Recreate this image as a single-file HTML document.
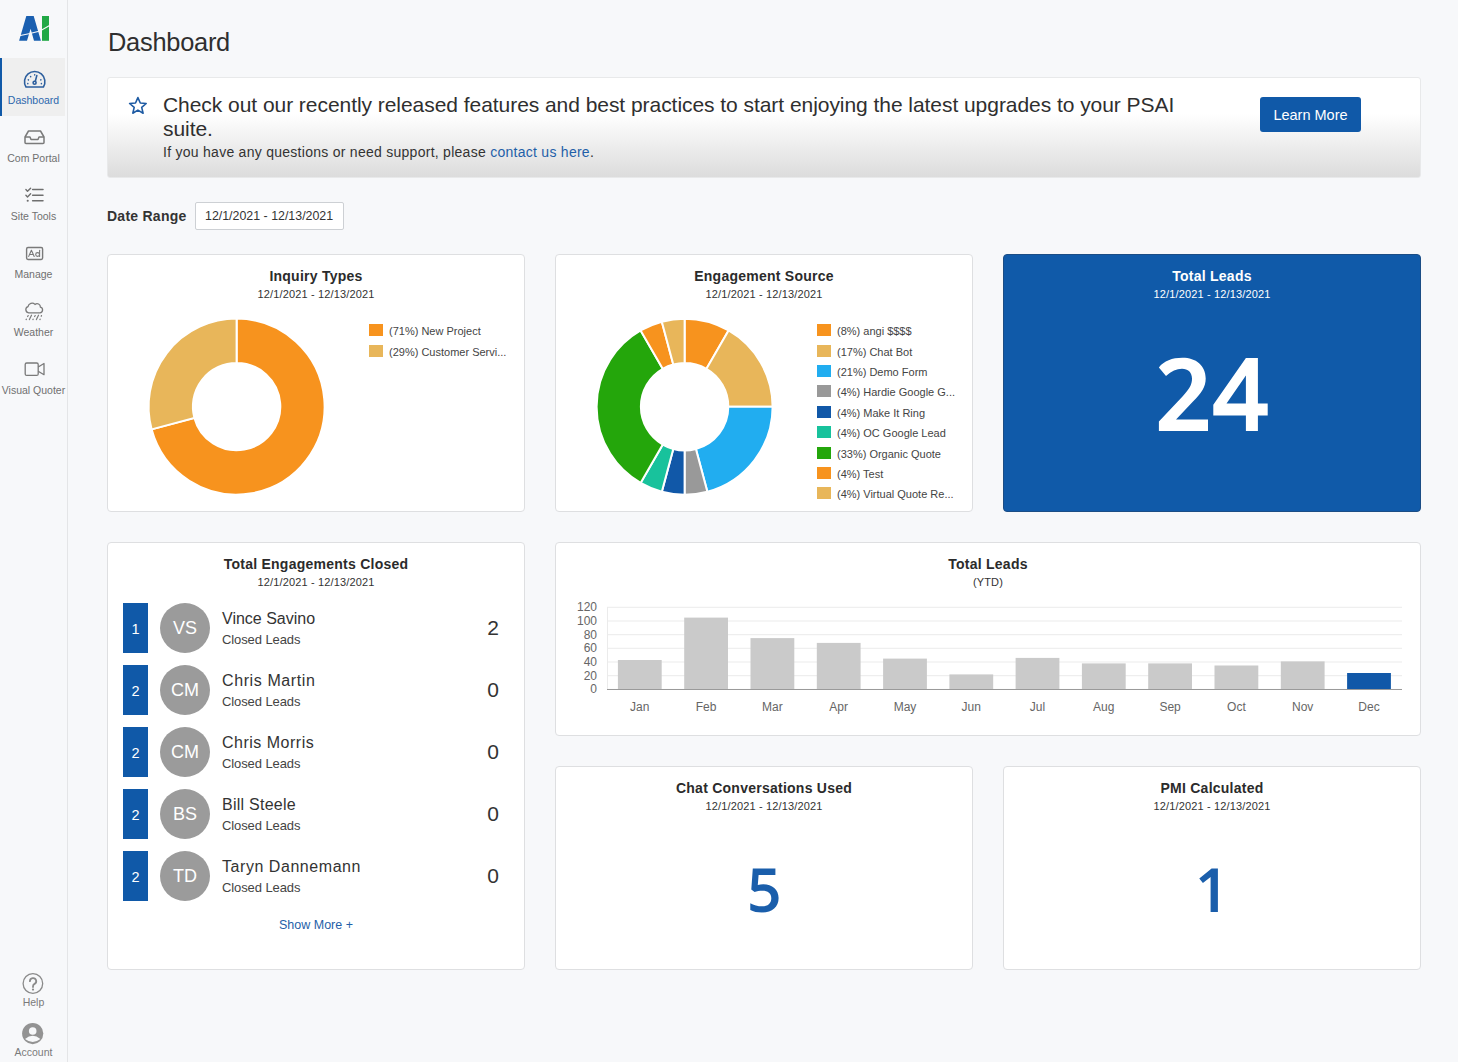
<!DOCTYPE html>
<html><head><meta charset="utf-8">
<style>
*{box-sizing:border-box;margin:0;padding:0}
html,body{width:1458px;height:1062px;overflow:hidden}
body{background:#f7f8fa;font-family:"Liberation Sans",sans-serif;color:#333;position:relative}
.a{position:absolute;white-space:nowrap}
#side{position:absolute;left:0;top:0;width:68px;height:1062px;background:#f7f8fa;border-right:1px solid #e4e5e7}
.nav{position:absolute;left:0;width:67px;height:58px}
.nav.act{background:linear-gradient(90deg,#efefef 65px,transparent 65px)}
.nav.act:before{content:"";position:absolute;left:0;top:0;width:2px;height:58px;background:#1059a8}
.nav svg{position:absolute;left:0;top:0}
.lbl{position:absolute;left:-20px;width:107px;font-size:10.5px;color:#707070;white-space:nowrap;text-align:center;line-height:12px}
.act .lbl{color:#2d67ad}
.card{position:absolute;background:#fff;border:1px solid #dedfe1;border-radius:4px}
.ct{position:absolute;left:0;right:0;text-align:center;font-weight:bold;font-size:14px;color:#2b2b2b;line-height:16px;letter-spacing:0.25px;white-space:nowrap}
.cs{position:absolute;left:0;right:0;text-align:center;font-size:11px;color:#333;line-height:13px;letter-spacing:0.15px;margin-top:1px;white-space:nowrap}
.leg{position:absolute;font-size:11px;color:#444;line-height:13px;white-space:nowrap;margin-top:1px}
.sw{position:absolute;width:14px;height:12px}
.yl{position:absolute;left:560px;width:37px;text-align:right;font-size:12px;color:#666;line-height:14px}
.ml{position:absolute;width:60px;top:700px;text-align:center;font-size:12px;color:#666;line-height:14px}
.rk{position:absolute;left:123px;width:25px;height:50px;background:#1059a8;color:#fff;font-size:14.5px;text-align:center;line-height:52px}
.av{position:absolute;left:160px;width:50px;height:50px;border-radius:50%;background:#9b9b9b;color:#fff;font-size:18px;text-align:center;line-height:50px}
.nm{position:absolute;left:222px;font-size:16px;color:#333;line-height:18px;white-space:nowrap;letter-spacing:0.2px}
.cl{position:absolute;left:222px;font-size:13px;color:#444;line-height:15px;white-space:nowrap;letter-spacing:-0.1px;margin-top:-1px}
.num{position:absolute;left:439px;width:60px;text-align:right;font-size:21px;color:#333;line-height:24px}
</style></head>
<body>
<div id="side">
  <svg class="a" style="left:0;top:0" width="67" height="50" viewBox="0 0 67 50">
    <path d="M26.3,16 L33.7,16 L40.9,40.8 L34,40.8 L30.6,28.7 L27,40.8 L19.1,40.8 Z" fill="#1a5fb0"/>
    <rect x="42" y="16" width="7" height="24.8" fill="#21a845"/>
    <path d="M18,36 L30,33.5 L40,31 L50,25.3" stroke="#f7f8fa" stroke-width="1.1" fill="none"/>
  </svg>
  <div class="nav act" style="top:58px">
    <svg width="67" height="58" viewBox="0 0 67 58" fill="none" stroke="#2d5f9e" stroke-width="1.6" stroke-linecap="round" stroke-linejoin="round">
      <path d="M26,29 L43.4,29 A10.2,10.2 0 1 0 26,29 Z"/>
      <circle cx="34.6" cy="24.8" r="1.5"/>
      <path d="M35.3,23.3 L36.8,17.6"/>
      <path d="M28.3,21.8 L28.4,21.9 M30.6,18.6 L30.7,18.7 M34.7,16.8 L34.7,16.9 M40.9,21.8 L40.8,21.9 M27.8,25.6 L27.8,25.7 M41.4,25.6 L41.4,25.7" stroke-width="1.5"/>
    </svg>
    <div class="lbl" style="top:36px">Dashboard</div>
  </div>
  <div class="nav" style="top:116px">
    <svg width="67" height="58" viewBox="0 0 67 58" fill="none" stroke="#7a7a7a" stroke-width="1.5" stroke-linejoin="round">
      <path d="M25,21 L28.5,15 L40.5,15 L44,21 L44,26.5 Q44,27.5 43,27.5 L26,27.5 Q25,27.5 25,26.5 Z"/>
      <path d="M25,21 L30,21 L31,23.5 L38,23.5 L39,21 L44,21"/>
    </svg>
    <div class="lbl" style="top:36px">Com Portal</div>
  </div>
  <div class="nav" style="top:174px">
    <svg width="67" height="58" viewBox="0 0 67 58" fill="none" stroke="#6f6f6f" stroke-width="1.4" stroke-linecap="round" stroke-linejoin="round">
      <path d="M25.9,15.6 L27.5,17.3 L30.6,14.2 M25.9,21.3 L27.5,22.9 L30.6,19.8"/>
      <circle cx="27.7" cy="26.8" r="1.05" fill="#6f6f6f" stroke="none"/>
      <path d="M32.6,15.5 L43,15.5 M32.6,21.3 L43,21.3 M32.6,26.8 L43,26.8" stroke-width="1.5"/>
    </svg>
    <div class="lbl" style="top:36px">Site Tools</div>
  </div>
  <div class="nav" style="top:232px">
    <svg width="67" height="58" viewBox="0 0 67 58" fill="none" stroke="#7a7a7a" stroke-width="1.4" stroke-linecap="round" stroke-linejoin="round">
      <rect x="26.6" y="15.5" width="16" height="12" rx="1.4"/>
      <path d="M28.7,24.4 L31.4,18.3 L34.2,24.4 M29.6,22.5 L33.3,22.5" stroke-width="1.1"/>
      <circle cx="37.6" cy="22.5" r="1.9" stroke-width="1.1"/>
      <path d="M39.6,18.2 L39.6,24.4" stroke-width="1.1"/>
    </svg>
    <div class="lbl" style="top:36px">Manage</div>
  </div>
  <div class="nav" style="top:290px">
    <svg width="67" height="58" viewBox="0 0 67 58" fill="none" stroke="#7a7a7a" stroke-width="1.3" stroke-linecap="round">
      <path d="M28.6,22.8 A3.2,3.2 0 0 1 28.0,16.6 A4.1,4.1 0 0 1 35.0,14.4 A3.3,3.3 0 0 1 40.4,17.1 A2.9,2.9 0 0 1 39.9,22.8 Z"/>
      <path d="M31.5,25.2 L29.4,29.6 M38.5,25.2 L36.4,29.6 M28.2,25.6 L27.6,26.5 M35.2,25.6 L34.6,26.5 M41.5,25.6 L41.2,26.3 M26.4,29.2 L26.1,29.6 M33.2,29.2 L32.9,29.6 M40.2,29.2 L39.9,29.6" stroke-width="1.2"/>
    </svg>
    <div class="lbl" style="top:36px">Weather</div>
  </div>
  <div class="nav" style="top:348px">
    <svg width="67" height="58" viewBox="0 0 67 58" fill="none" stroke="#7a7a7a" stroke-width="1.3" stroke-linejoin="round">
      <rect x="25.2" y="15" width="13" height="12.4" rx="1.5"/>
      <path d="M38.2,19 L44,15.5 L44,26.7 L38.2,23.2"/>
    </svg>
    <div class="lbl" style="top:36px">Visual Quoter</div>
  </div>
  <svg class="a" style="left:0;top:960px" width="67" height="102" viewBox="0 960 67 102">
    <circle cx="32.9" cy="983.5" r="9.8" fill="none" stroke="#8a8a8a" stroke-width="1.3"/>
    <path d="M29.9,981.2 A3.15,3.15 0 1 1 34.3,984.1 Q33,985 33,986.4 L33,987.1" fill="none" stroke="#8a8a8a" stroke-width="1.8" stroke-linecap="round"/>
    <circle cx="33" cy="989.6" r="1.1" fill="#8a8a8a"/>
    <circle cx="32.7" cy="1033.6" r="10.6" fill="#939393"/>
    <circle cx="32.7" cy="1031" r="3.8" fill="#f7f8fa"/>
    <path d="M25,1039 Q32.7,1032.5 40.4,1039 Q32.7,1045 25,1039 Z" fill="#f7f8fa"/>
  </svg>
  <div class="lbl" style="top:996px;color:#7a7a7a">Help</div>
  <div class="lbl" style="top:1046px;color:#7a7a7a">Account</div>
</div>

<div class="a" style="left:108px;top:28px;font-size:25.4px;line-height:28px;color:#2f2f2f;letter-spacing:-0.25px">Dashboard</div>

<div class="a" style="left:107px;top:77px;width:1314px;height:101px;border:1px solid #e8e9ea;border-radius:3px;background:linear-gradient(#fff 0%,#fff 36%,#dcdcdc 100%)">
  <svg class="a" style="left:19px;top:18px" width="22" height="20" viewBox="0 0 22 20">
    <path d="M10.9,1.6 L13.3,7 L19.2,7.5 L14.7,11.4 L16.1,17.2 L10.9,14.1 L5.8,17.2 L7.2,11.4 L2.6,7.5 L8.5,7 Z" fill="none" stroke="#1d5aa3" stroke-width="1.6" stroke-linejoin="round"/>
  </svg>
  <div class="a" style="left:55px;top:14.5px;font-size:21px;line-height:24px;color:#2f2f2f;letter-spacing:-0.05px">Check out our recently released features and best practices to start enjoying the latest upgrades to your PSAI</div>
  <div class="a" style="left:55px;top:38.5px;font-size:21px;line-height:24px;color:#2f2f2f;letter-spacing:-0.05px">suite.</div>
  <div class="a" style="left:55px;top:66px;font-size:14px;line-height:17px;color:#333;letter-spacing:0.27px">If you have any questions or need support, please <span style="color:#1f5fa8">contact us here</span>.</div>
  <div class="a" style="left:1152px;top:19px;width:101px;height:35px;background:#1059a8;border-radius:3px;color:#fff;font-size:14.5px;line-height:37px;text-align:center">Learn More</div>
</div>

<div class="a" style="left:107px;top:208px;font-size:14px;font-weight:bold;line-height:17px;color:#333;letter-spacing:0.25px">Date Range</div>
<div class="a" style="left:195px;top:202px;width:149px;height:28px;background:#fff;border:1px solid #cdd0d4;border-radius:2px;font-size:12.4px;line-height:26px;color:#333;padding-left:9px">12/1/2021 - 12/13/2021</div>

<div class="card" style="left:107px;top:254px;width:418px;height:258px">
  <div class="ct" style="top:13px">Inquiry Types</div>
  <div class="cs" style="top:32px">12/1/2021 - 12/13/2021</div>
  <div class="sw" style="left:261px;top:69px;background:#f7931e"></div>
  <div class="leg" style="left:281px;top:69px">(71%) New Project</div>
  <div class="sw" style="left:261px;top:90px;background:#e8b65a"></div>
  <div class="leg" style="left:281px;top:90px">(29%) Customer Servi...</div>
</div>

<div class="card" style="left:555px;top:254px;width:418px;height:258px">
  <div class="ct" style="top:13px">Engagement Source</div>
  <div class="cs" style="top:32px">12/1/2021 - 12/13/2021</div>
  <div class="sw" style="left:261px;top:69px;background:#f7931e"></div><div class="leg" style="left:281px;top:69px">(8%) angi $$$$</div>
<div class="sw" style="left:261px;top:90px;background:#e8b65a"></div><div class="leg" style="left:281px;top:90px">(17%) Chat Bot</div>
<div class="sw" style="left:261px;top:110px;background:#21adf0"></div><div class="leg" style="left:281px;top:110px">(21%) Demo Form</div>
<div class="sw" style="left:261px;top:130px;background:#999999"></div><div class="leg" style="left:281px;top:130px">(4%) Hardie Google G...</div>
<div class="sw" style="left:261px;top:151px;background:#1158a8"></div><div class="leg" style="left:281px;top:151px">(4%) Make It Ring</div>
<div class="sw" style="left:261px;top:171px;background:#18c29c"></div><div class="leg" style="left:281px;top:171px">(4%) OC Google Lead</div>
<div class="sw" style="left:261px;top:192px;background:#24a60b"></div><div class="leg" style="left:281px;top:192px">(33%) Organic Quote</div>
<div class="sw" style="left:261px;top:212px;background:#f7931e"></div><div class="leg" style="left:281px;top:212px">(4%) Test</div>
<div class="sw" style="left:261px;top:232px;background:#e8b65a"></div><div class="leg" style="left:281px;top:232px">(4%) Virtual Quote Re...</div>
</div>

<div class="a" style="left:1003px;top:254px;width:418px;height:258px;background:#105aa9;border:1px solid #1b4d85;border-radius:4px">
  <div class="ct" style="top:13px;color:#fff">Total Leads</div>
  <div class="cs" style="top:32px;color:#fff">12/1/2021 - 12/13/2021</div>
  
</div>

<div class="card" style="left:107px;top:542px;width:418px;height:428px">
  <div class="ct" style="top:13px">Total Engagements Closed</div>
  <div class="cs" style="top:32px">12/1/2021 - 12/13/2021</div>
</div>
<div class="rk" style="top:603px">1</div><div class="av" style="top:603px">VS</div><div class="nm" style="top:610px;letter-spacing:0px">Vince Savino</div><div class="cl" style="top:633px">Closed Leads</div><div class="num" style="top:616px">2</div>
<div class="rk" style="top:665px">2</div><div class="av" style="top:665px">CM</div><div class="nm" style="top:672px;letter-spacing:0.6px">Chris Martin</div><div class="cl" style="top:695px">Closed Leads</div><div class="num" style="top:678px">0</div>
<div class="rk" style="top:727px">2</div><div class="av" style="top:727px">CM</div><div class="nm" style="top:734px;letter-spacing:0.5px">Chris Morris</div><div class="cl" style="top:757px">Closed Leads</div><div class="num" style="top:740px">0</div>
<div class="rk" style="top:789px">2</div><div class="av" style="top:789px">BS</div><div class="nm" style="top:796px;letter-spacing:0.25px">Bill Steele</div><div class="cl" style="top:819px">Closed Leads</div><div class="num" style="top:802px">0</div>
<div class="rk" style="top:851px">2</div><div class="av" style="top:851px">TD</div><div class="nm" style="top:858px;letter-spacing:0.55px">Taryn Dannemann</div><div class="cl" style="top:881px">Closed Leads</div><div class="num" style="top:864px">0</div>
<div class="a" style="left:107px;top:918px;width:418px;text-align:center;font-size:12.5px;line-height:15px;color:#1f5fa8;letter-spacing:0px">Show More +</div>

<div class="card" style="left:555px;top:542px;width:866px;height:194px">
  <div class="ct" style="top:13px">Total Leads</div>
  <div class="cs" style="top:32px">(YTD)</div>
</div>
<div class="yl" style="top:600.3px">120</div>
<div class="yl" style="top:614.0px">100</div>
<div class="yl" style="top:627.7px">80</div>
<div class="yl" style="top:641.3px">60</div>
<div class="yl" style="top:655.0px">40</div>
<div class="yl" style="top:668.7px">20</div>
<div class="yl" style="top:682.4px">0</div>
<div class="ml" style="left:609.8px">Jan</div>
<div class="ml" style="left:676.1px">Feb</div>
<div class="ml" style="left:742.4px">Mar</div>
<div class="ml" style="left:808.7px">Apr</div>
<div class="ml" style="left:875.0px">May</div>
<div class="ml" style="left:941.2px">Jun</div>
<div class="ml" style="left:1007.5px">Jul</div>
<div class="ml" style="left:1073.8px">Aug</div>
<div class="ml" style="left:1140.1px">Sep</div>
<div class="ml" style="left:1206.4px">Oct</div>
<div class="ml" style="left:1272.7px">Nov</div>
<div class="ml" style="left:1339.0px">Dec</div>

<div class="card" style="left:555px;top:766px;width:418px;height:204px">
  <div class="ct" style="top:13px">Chat Conversations Used</div>
  <div class="cs" style="top:32px">12/1/2021 - 12/13/2021</div>
  
</div>
<div class="card" style="left:1003px;top:766px;width:418px;height:204px">
  <div class="ct" style="top:13px">PMI Calculated</div>
  <div class="cs" style="top:32px">12/1/2021 - 12/13/2021</div>
  
</div>

<svg class="a" style="left:0;top:0;pointer-events:none" width="1458" height="1062" viewBox="0 0 1458 1062">
<path d="M236.60,318.60A88,88 0 1 1 151.60,429.38L194.39,417.91A43.7,43.7 0 1 0 236.60,362.90Z" fill="#f7931e" stroke="#fff" stroke-width="2"/>
<path d="M151.60,429.38A88,88 0 0 1 236.60,318.60L236.60,362.90A43.7,43.7 0 0 0 194.39,417.91Z" fill="#e8b65a" stroke="#fff" stroke-width="2"/>
<path d="M684.60,318.70A88,88 0 0 1 728.60,330.49L706.45,368.85A43.7,43.7 0 0 0 684.60,363.00Z" fill="#f7931e" stroke="#fff" stroke-width="2"/>
<path d="M728.60,330.49A88,88 0 0 1 772.60,406.70L728.30,406.70A43.7,43.7 0 0 0 706.45,368.85Z" fill="#e8b65a" stroke="#fff" stroke-width="2"/>
<path d="M772.60,406.70A88,88 0 0 1 707.38,491.70L695.91,448.91A43.7,43.7 0 0 0 728.30,406.70Z" fill="#21adf0" stroke="#fff" stroke-width="2"/>
<path d="M707.38,491.70A88,88 0 0 1 684.60,494.70L684.60,450.40A43.7,43.7 0 0 0 695.91,448.91Z" fill="#999999" stroke="#fff" stroke-width="2"/>
<path d="M684.60,494.70A88,88 0 0 1 661.82,491.70L673.29,448.91A43.7,43.7 0 0 0 684.60,450.40Z" fill="#1158a8" stroke="#fff" stroke-width="2"/>
<path d="M661.82,491.70A88,88 0 0 1 640.60,482.91L662.75,444.55A43.7,43.7 0 0 0 673.29,448.91Z" fill="#18c29c" stroke="#fff" stroke-width="2"/>
<path d="M640.60,482.91A88,88 0 0 1 640.60,330.49L662.75,368.85A43.7,43.7 0 0 0 662.75,444.55Z" fill="#24a60b" stroke="#fff" stroke-width="2"/>
<path d="M640.60,330.49A88,88 0 0 1 661.82,321.70L673.29,364.49A43.7,43.7 0 0 0 662.75,368.85Z" fill="#f7931e" stroke="#fff" stroke-width="2"/>
<path d="M661.82,321.70A88,88 0 0 1 684.60,318.70L684.60,363.00A43.7,43.7 0 0 0 673.29,364.49Z" fill="#e8b65a" stroke="#fff" stroke-width="2"/>

<line x1="607" y1="607.3" x2="1402" y2="607.3" stroke="#ebebeb" stroke-width="1"/>
<line x1="607" y1="621.0" x2="1402" y2="621.0" stroke="#ebebeb" stroke-width="1"/>
<line x1="607" y1="634.7" x2="1402" y2="634.7" stroke="#ebebeb" stroke-width="1"/>
<line x1="607" y1="648.3" x2="1402" y2="648.3" stroke="#ebebeb" stroke-width="1"/>
<line x1="607" y1="662.0" x2="1402" y2="662.0" stroke="#ebebeb" stroke-width="1"/>
<line x1="607" y1="675.7" x2="1402" y2="675.7" stroke="#ebebeb" stroke-width="1"/>
<line x1="607" y1="689.4" x2="1402" y2="689.4" stroke="#ebebeb" stroke-width="1"/>
<rect x="617.9" y="660.0" width="43.8" height="29.4" fill="#cacaca"/>
<rect x="684.2" y="617.6" width="43.8" height="71.8" fill="#cacaca"/>
<rect x="750.5" y="638.1" width="43.8" height="51.3" fill="#cacaca"/>
<rect x="816.8" y="642.9" width="43.8" height="46.5" fill="#cacaca"/>
<rect x="883.1" y="658.6" width="43.8" height="30.8" fill="#cacaca"/>
<rect x="949.4" y="674.4" width="43.8" height="15.0" fill="#cacaca"/>
<rect x="1015.6" y="657.9" width="43.8" height="31.5" fill="#cacaca"/>
<rect x="1081.9" y="663.4" width="43.8" height="26.0" fill="#cacaca"/>
<rect x="1148.2" y="663.4" width="43.8" height="26.0" fill="#cacaca"/>
<rect x="1214.5" y="665.5" width="43.8" height="23.9" fill="#cacaca"/>
<rect x="1280.8" y="661.4" width="43.8" height="28.0" fill="#cacaca"/>
<rect x="1347.1" y="673.0" width="43.8" height="16.4" fill="#1158a8"/>
<line x1="607.5" y1="607" x2="607.5" y2="690" stroke="#ebebeb"/>
<line x1="607" y1="689.5" x2="1402" y2="689.5" stroke="#9a9a9a"/>
<path d="M1211.6,868.5 L1217.9,868.5 L1217.9,911.9 L1210.6,911.9 L1210.6,877 L1202.9,883 L1199.3,878.5 Z" fill="#1a5eab"/>
<path d="M1158.9,367.4 C1164,361 1172,357.8 1182.5,357.8 C1196,357.8 1205.7,365.5 1205.7,378.5 C1205.7,387 1201.5,393 1193,401.5 L1176,419.6 L1208,419.6 L1208,431.1 L1158.9,431.1 L1158.9,421.5 L1182.5,396.5 C1189.5,389 1192,384.5 1192,378.8 C1192,372.3 1188,368.7 1182,368.7 C1176.5,368.7 1171.5,371 1166,375.9 Z" fill="#fff"/>
<path fill-rule="evenodd" d="M1245.9,358 L1257.9,358 L1257.9,403.5 L1267.7,403.5 L1267.7,415.5 L1257.9,415.5 L1257.9,431.1 L1245.9,431.1 L1245.9,415.5 L1213.3,415.5 L1213.3,404.8 Z M1245.9,375.5 L1226.5,403.5 L1245.9,403.5 Z" fill="#fff"/>
<path d="M752.8,868.5 L775.4,868.5 L775.4,875 L758.6,875 L757.8,884.9 C759.5,884.4 761.3,884.2 763.3,884.2 C772.3,884.2 778.6,889.6 778.6,898 C778.6,907 772.3,912.4 762.3,912.4 C757.3,912.4 753.2,911.6 750.3,909.9 L750.3,903.2 C753.6,905.2 758,906.3 762.2,906.3 C767.8,906.3 771.3,903.3 771.3,898.2 C771.3,893.4 768,890.8 762.3,890.8 C759.4,890.8 756.9,891.3 754.6,891.9 L751.3,889.6 Z" fill="#1a5eab"/>
</svg>
</body></html>
